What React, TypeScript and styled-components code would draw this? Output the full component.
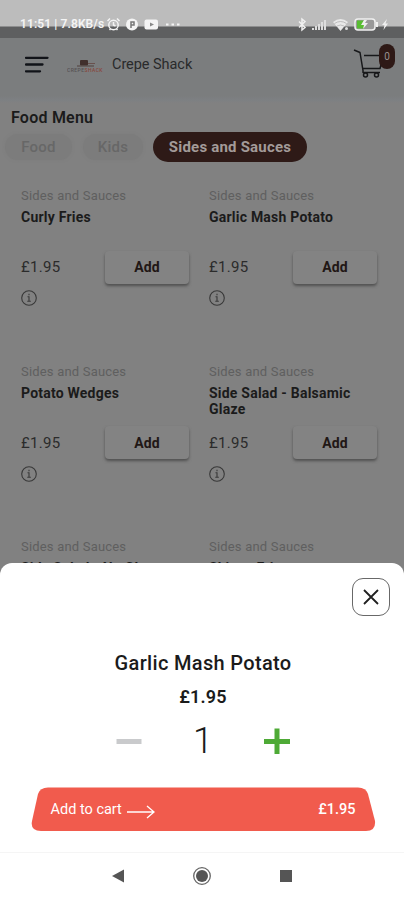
import React from "react";
import styled, { createGlobalStyle } from "styled-components";

const Global = createGlobalStyle`
  * { box-sizing: border-box; }
  body { margin: 0; background: #818181; font-family: Roboto, "Liberation Sans", sans-serif; }
  button { font-family: inherit; border: 0; padding: 0; background: none; }
`;

const Phone = styled.div`
  position: relative;
  width: 404px;
  height: 900px;
  overflow: hidden;
  background: #818181;
  color: #1b1b1b;
`;
const StatusBar = styled.div`
  height: 38px;
  display: flex;
  align-items: flex-start;
  padding: 15px 15px 0 20px;
  background: linear-gradient(#bcbcbc 0 26px, #5e5f60 27px);
  color: #f4f4f4;
`;
const Clock = styled.span`
  width: 85px;
  font-size: 12px;
  line-height: 19px;
  font-weight: 600;
  letter-spacing: 0.1px;
  white-space: nowrap;
`;
const StatusIcons = styled.svg`
  display: block;
  flex: none;
`;
const Spacer = styled.div`
  flex: 1;
`;
const Header = styled.header`
  height: 65px;
  display: flex;
  align-items: flex-start;
  padding: 4px 8px 0 25px;
  background: linear-gradient(#7b7d7e 0 58px, #7d8083 62px, #818181);
`;
const MenuIcon = styled.svg`
  margin: 14px 18px 0 0;
`;
const Logo = styled.svg`
  margin: 13px 8px 0 0;
`;
const Brand = styled.span`
  font-size: 14.5px;
  line-height: 20px;
  margin-top: 13px;
  letter-spacing: -0.05px;
  color: #292a2b;
`;
const Cart = styled.div`
  position: relative;
  width: 43px;
  height: 40px;
`;
const CartIcon = styled.svg`
  display: block;
  margin-top: 6px;
`;
const Badge = styled.span`
  position: absolute;
  right: 1px;
  top: 2px;
  width: 16px;
  height: 25px;
  border-radius: 8px;
  background: #2e1916;
  color: #99918f;
  font-size: 10px;
  line-height: 25px;
  text-align: center;
`;
const MenuTitle = styled.h1`
  margin: 0;
  padding: 5px 11px 0;
  font-size: 16px;
  line-height: 20px;
  font-weight: 600;
  letter-spacing: 0.23px;
`;
const Tabs = styled.nav`
  display: flex;
  padding: 4px 5px 0;
`;
const Tab = styled.button<{ $active?: boolean; $width: number }>`
  width: ${(p) => p.$width}px;
  height: ${(p) => (p.$active ? 30 : 26)}px;
  margin-top: ${(p) => (p.$active ? 0 : 2)}px;
  margin-right: ${(p) => (p.$width < 65 ? 10 : 11)}px;
  border-radius: 15px;
  font-size: 15px;
  font-weight: ${(p) => (p.$active ? 700 : 500)};
  letter-spacing: 0.2px;
  color: ${(p) => (p.$active ? "#a39b99" : "#676767")};
  background: ${(p) => (p.$active ? "#2e1a17" : "#7c7c7c")};
  box-shadow: ${(p) => (p.$active ? "none" : "0 0 3px #7c7c7c")};
`;
const Grid = styled.main`
  display: grid;
  grid-template-columns: 168px 168px;
  column-gap: 20px;
  grid-auto-rows: 175.5px;
  padding: 25px 21px 0;
`;
const Item = styled.article`
  display: flex;
  flex-direction: column;
`;
const Category = styled.span`
  font-size: 13px;
  line-height: 17px;
  letter-spacing: 0.19px;
  color: #5f5f5f;
`;
const ItemName = styled.h2`
  margin: 5px 0 0;
  height: 34px;
  font-size: 14px;
  line-height: 16px;
  font-weight: 700;
  letter-spacing: 0.22px;
  white-space: pre-line;
`;
const BuyRow = styled.div`
  display: flex;
  align-items: center;
  justify-content: space-between;
  height: 34px;
  margin-top: 7px;
`;
const ItemPrice = styled.span`
  font-size: 15px;
  letter-spacing: 0.3px;
  color: #2b2b2b;
`;
const AddButton = styled.button`
  width: 84px;
  height: 33px;
  border-radius: 4px;
  background: #838383;
  box-shadow: 0 2px 3px #505050;
  color: #211715;
  font-size: 14px;
  font-weight: 700;
  letter-spacing: 0.1px;
`;
const InfoIcon = styled.svg`
  margin: 5px 0 0 -1px;
`;
const Sheet = styled.section`
  position: absolute;
  left: 0;
  right: 0;
  bottom: 0;
  height: 337px;
  border-radius: 12px 12px 0 0;
  background: #fff;
  display: flex;
  flex-direction: column;
  align-items: center;
`;
const CloseButton = styled.button`
  align-self: flex-end;
  display: flex;
  align-items: center;
  justify-content: center;
  width: 38px;
  height: 38px;
  margin: 15px 14px 0 0;
  border: 1px solid #686868;
  border-radius: 11px;
`;
const SheetTitle = styled.h2`
  margin: 34px 0 0;
  padding-left: 2px;
  font-size: 20px;
  line-height: 26px;
  font-weight: 500;
  letter-spacing: 0.33px;
`;
const SheetPrice = styled.strong`
  margin-top: 10px;
  padding-left: 2px;
  font-size: 18px;
  line-height: 22px;
  font-weight: 600;
  letter-spacing: 0.2px;
`;
const Quantity = styled.div`
  display: flex;
  align-items: center;
  justify-content: space-between;
  width: 174px;
  height: 44px;
  margin: 11px 0 0 2px;
`;
const Count = styled.span`
  font-size: 36px;
  font-weight: 300;
  line-height: 44px;
`;
const CartButton = styled.button`
  position: relative;
  display: flex;
  align-items: center;
  width: 345px;
  height: 45px;
  margin: 24px 0 0 2px;
  padding: 0 20px;
  color: #fff;
`;
const ButtonShape = styled.svg`
  position: absolute;
  inset: 0;
`;
const ButtonText = styled.span<{ $medium?: boolean }>`
  position: relative;
  font-size: ${(p) => (p.$medium ? 14.5 : 14.5)}px;
  line-height: 20px;
  font-weight: ${(p) => (p.$medium ? 500 : 400)};
`;
const Arrow = styled.svg`
  position: relative;
  margin: 4px 0 0 4px;
`;
const SystemNav = styled.footer`
  width: 100%;
  height: 48px;
  margin-top: auto;
  border-top: 1px solid #f5f5f5;
  display: flex;
  align-items: center;
  justify-content: center;
  gap: 67px;
  padding-bottom: 1px;
`;

const items = [
  "Curly Fries",
  "Garlic Mash Potato",
  "Potato Wedges",
  "Side Salad - Balsamic\nGlaze",
  "Side Salad - No Glaze",
  "Skinny Fries",
];

export default function App() {
  return (
    <>
      <Global />
      <Phone>
        <StatusBar>
          <Clock>11:51 | 7.8KB/s</Clock>
          <StatusIcons width="78" height="19" fill="none" stroke="#f4f4f4" strokeWidth="1.5">
            <circle cx="8.5" cy="10" r="4.7" />
            <path d="M2.5 6 5 3.5M12 3.5 14.5 6M8.5 7v3l2 1M4.5 15l1-1M12.5 15l-1-1" />
            <circle cx="27" cy="9.5" r="6" fill="#f4f4f4" stroke="none" />
            <path d="M26 13V7h3v3h-3" stroke="#777" />
            <rect x="39.5" y="4.5" width="13.5" height="10" rx="2" fill="#f4f4f4" stroke="none" />
            <path d="m45 7.5 4 2-4 2z" fill="#888" stroke="none" />
            <path d="M61 9.5h2.500M66.500 9.500h2.500M72 9.500h2.500" strokeWidth="2" />
          </StatusIcons>
          <Spacer />
          <StatusIcons width="93" height="19" fill="none" stroke="#f0f0f0" strokeWidth="1.5">
            <path d="m3 6.500 6 6-3 2.500V4l3 2.500-6 6" />
            <path d="M17 15v-2M20 15v-4M23 15V9M26 15V7M29 15V5" stroke="#ddd" strokeWidth="2" />
            <path d="M37 7q7.500-6 15 0l-7.500 9z" fill="#e8e8e8" stroke="none" />
            <path d="M38.500 8.500q6-4 12 0M41 11q3.500-2 7 0" stroke="#aaa" strokeWidth=".7" />
            <circle cx="50.500" cy="13.500" r="1.500" fill="#ddd" stroke="none" />
            <rect x="59" y="4" width="20" height="11" rx="3" fill="#999" />
            <path d="M61 5.500h7v8h-7z" fill="#58bd32" stroke="none" />
            <path d="m68 5-3 5h3l-1 4 5-6h-3l2-3z" fill="#eee" stroke="none" />
            <path d="M81 7v5" strokeWidth="2" />
            <path d="m91 4-5 6h2.500l-1 5 4.500-6.500h-2.500z" fill="#f0f0f0" stroke="none" />
          </StatusIcons>
        </StatusBar>
        <Header>
          <MenuIcon width="24" height="18" stroke="#111318" strokeWidth="2.3" strokeLinecap="round">
            <path d="M1 1.800h21.500M1 8.500h16.500M1 15.300h14" />
          </MenuIcon>
          <Logo width="37" height="18">
            <rect x="13" y="5" width="8" height="5.500" rx="1" fill="#41302d" />
            <path d="M10 11h17" stroke="#51403d" strokeWidth="1" />
            <path d="M21 8.500h7" stroke="#69514d" />
            <text x="0" y="17" fontSize="5" fontWeight="500" fill="#565153" textLength="17">CREPE</text>
            <text x="17.500" y="17" fontSize="5" fontWeight="500" fill="#88483f" textLength="18">SHACK</text>
          </Logo>
          <Brand>Crepe Shack</Brand>
          <Spacer />
          <Cart>
            <CartIcon width="32" height="31" fill="none" stroke="#17181a" strokeWidth="1.5" strokeLinejoin="round">
              <path d="M1 2 7 4.500l3 18M11 7.500h18M9.500 20.500H27l3-11M10 22v2.500h17" />
              <circle cx="12.500" cy="27" r="2" />
              <circle cx="23.500" cy="27" r="2" />
            </CartIcon>
            <Badge>0</Badge>
          </Cart>
        </Header>
        <MenuTitle>Food Menu</MenuTitle>
        <Tabs>
          <Tab $width={67}>Food</Tab>
          <Tab $width={60}>Kids</Tab>
          <Tab $width={154} $active>Sides and Sauces</Tab>
        </Tabs>
        <Grid>
          {items.map((name) => (
            <Item key={name}>
              <Category>Sides and Sauces</Category>
              <ItemName>{name}</ItemName>
              <BuyRow>
                <ItemPrice>£1.95</ItemPrice>
                <AddButton>Add</AddButton>
              </BuyRow>
              <InfoIcon width="18" height="18" fill="none" stroke="#383838" strokeWidth="1.100">
                <circle cx="9" cy="9" r="7.300" />
                <path d="M7.500 7.800H9V12M7.300 12.300h3.500M9 4.800v1.400" />
              </InfoIcon>
            </Item>
          ))}
        </Grid>
        <Sheet>
          <CloseButton aria-label="Close">
            <svg width="16" height="16" stroke="#202020" strokeWidth="1.800">
              <path d="m1 1 14 14M15 1 1 15" />
            </svg>
          </CloseButton>
          <SheetTitle>Garlic Mash Potato</SheetTitle>
          <SheetPrice>£1.95</SheetPrice>
          <Quantity>
            <svg width="26" height="26"><path d="M.5 13.500h25" stroke="#c9cacc" strokeWidth="5" /></svg>
            <Count>1</Count>
            <svg width="26" height="26"><path d="M0 13.500h26M13 .5v25.500" stroke="#4eaa36" strokeWidth="5" /></svg>
          </Quantity>
          <CartButton>
            <ButtonShape width="345" height="45">
              <path d="M17 .5H327Q335 .5 337 7L344 34Q345 44 335 44H10Q-1 44 1 34L7 7Q9 .5 17 .5Z" fill="#f15b4d" />
            </ButtonShape>
            <ButtonText>Add to cart</ButtonText>
            <Arrow width="30" height="14" fill="none" stroke="#fff" strokeWidth="1.300">
              <path d="M1 7h27M21 1l7 6-7 6" />
            </Arrow>
            <Spacer />
            <ButtonText $medium>£1.95</ButtonText>
          </CartButton>
          <SystemNav>
            <svg width="14" height="14"><path d="M1 7 13 .5v13z" fill="#555" /></svg>
            <svg width="20" height="20">
              <circle cx="10" cy="10" r="8.300" fill="none" stroke="#666" strokeWidth="1.300" />
              <circle cx="10" cy="10" r="6" fill="#555" />
            </svg>
            <svg width="14" height="14"><path d="M1 1h12v12H1z" fill="#555" /></svg>
          </SystemNav>
        </Sheet>
      </Phone>
    </>
  );
}
